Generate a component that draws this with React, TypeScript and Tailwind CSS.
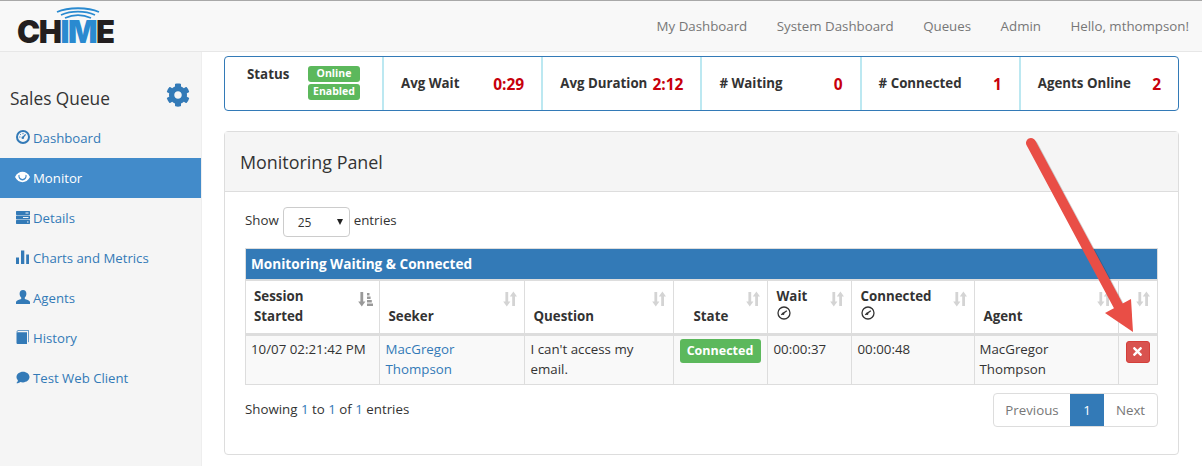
// Chime queue monitor screen
import { ReactNode } from "react";
import { FaCog, FaTimes, FaComment } from "react-icons/fa";

// glyph style icons drawn by hand
function DashIcon({ className }: { className?: string }) {
  return (
    <svg viewBox="0 0 14 14" className={className} fill="none">
      <circle cx="7" cy="7" r="6" stroke="currentColor" strokeWidth="2" />
      <path d="M6.600 7.800 9.600 4.400" stroke="currentColor" strokeWidth="1.300" />
      <circle cx="6.800" cy="7.800" r="1.300" fill="currentColor" />
      <path d="M3.200 7h1.200M7 3v1.200M4.200 4.200l.8.800" stroke="currentColor" strokeWidth="1" />
    </svg>
  );
}

function EyeIcon({ className }: { className?: string }) {
  return (
    <svg viewBox="0 0 16 12" className={className}>
      <path fill="currentColor" d="M0 6C2 2.200 5 .5 8 .5s6 1.700 8 5.500c-2 3.800-5 5.500-8 5.500S2 9.800 0 6Z" />
      <path fill="#428bca" fillRule="evenodd" d="M3.600 4.200C3.400 7.400 5.400 9.600 8 9.600s4.600-2.200 4.400-5.400l-1.200-.6C11.600 6.200 10.200 8 8 8S4.400 6.200 4.800 3.600Z" />
    </svg>
  );
}

function TasksIcon({ className }: { className?: string }) {
  return (
    <svg viewBox="0 0 14 13" className={className}>
      <path
        fill="currentColor"
        fillRule="evenodd"
        d="M.5 0h13l.5.5v3l-.5.5H.5L0 3.500v-3ZM9.500 1.500v1h3v-1ZM.5 4.500h13l.5.500v3l-.5.500H.5L0 8V5ZM7 6v1h5.500V6ZM.5 9h13l.5.500v3l-.5.500H.5L0 12.500v-3ZM11 10.500v1h1.500v-1Z"
      />
    </svg>
  );
}

function StatsIcon({ className }: { className?: string }) {
  return (
    <svg viewBox="0 0 13 14" className={className}>
      <path fill="currentColor" d="M0 7.500h3V14H0ZM5 .5h3.300V14H5ZM10.200 4.500H13V14h-2.800Z" />
    </svg>
  );
}

function UserIcon({ className }: { className?: string }) {
  return (
    <svg viewBox="0 0 14 14" className={className}>
      <path fill="currentColor" d="M7 0c2.200 0 3.400 1.600 3.400 3.700 0 1.500-.6 3-1.600 3.900v1.500c2 .6 4.200 1.500 5.200 2.600V14H0v-2.300c1-1.100 3.200-2 5.200-2.600V7.600c-1-.9-1.600-2.400-1.600-3.900C3.600 1.600 4.800 0 7 0Z" />
    </svg>
  );
}

function BookIcon({ className }: { className?: string }) {
  return (
    <svg viewBox="0 0 13 14" className={className}>
      <path fill="currentColor" d="M.5 2.200h10.500V14H1.200L.5 13.300Z" />
      <path fill="none" stroke="currentColor" strokeWidth="0.800" d="M.8 2 1.800.4h10.800v11.800" />
    </svg>
  );
}

function SortIcon({ className }: { className?: string }) {
  return (
    <svg viewBox="0 0 14 16" className={className}>
      <path fill="currentColor" d="M2.400 1h2.800v9.500h2.200L3.800 15.500.2 10.500h2.200ZM9.200 5.500H6.800L10.400.5 14 5.500h-2v9.500H9.200Z" />
    </svg>
  );
}

function SortAttrIcon({ className }: { className?: string }) {
  return (
    <svg viewBox="0 0 15 16" className={className}>
      <path fill="currentColor" d="M2.400 1h2.800v9.500h2.200L3.800 15.500.2 10.500h2.200ZM9 2h2.500v2.400H9ZM9 5.500h3.600v2.400H9ZM9 9h4.800v2.400H9ZM9 12.500h6V15H9Z" />
    </svg>
  );
}

function TimerIcon() {
  return (
    <span className="block h-[20px]">
      <svg viewBox="0 0 14 14" className="w-[14px] h-[14px] text-[#333]" fill="none">
        <circle cx="7" cy="7" r="6" stroke="currentColor" strokeWidth="1.300" />
        <path d="M4.200 8.800 9.800 4.800" stroke="currentColor" strokeWidth="1.300" />
        <circle cx="6.200" cy="7.800" r="1.200" fill="currentColor" />
      </svg>
    </span>
  );
}

const navItems: { label: string; icon: ReactNode; active?: boolean }[] = [
  { label: "Dashboard", icon: <DashIcon className="w-[14px] h-[14px]" /> },
  { label: "Monitor", icon: <EyeIcon className="w-[15px] h-[12px]" />, active: true },
  { label: "Details", icon: <TasksIcon className="w-[14px] h-[13px]" /> },
  { label: "Charts and Metrics", icon: <StatsIcon className="w-[13px] h-[14px]" /> },
  { label: "Agents", icon: <UserIcon className="w-[14px] h-[14px]" /> },
  { label: "History", icon: <BookIcon className="w-[13px] h-[14px]" /> },
  { label: "Test Web Client", icon: <FaComment className="w-[14px] h-[13px]" /> },
];

const stats = [
  { label: "Avg Wait", value: "0:29" },
  { label: "Avg Duration", value: "2:12" },
  { label: "# Waiting", value: "0" },
  { label: "# Connected", value: "1" },
  { label: "Agents Online", value: "2" },
];

function Th({ width, children, attr, last }: { width: number; children?: ReactNode; attr?: boolean; last?: boolean }) {
  return (
    <th
      style={{ width }}
      className={`relative align-bottom text-left border-b-[3px] border-b-[#ddd] ${last ? "" : "border-r border-r-[#ddd]"} pl-[9px] pr-6 pb-[4px] pt-[6px] font-bold leading-[20px] text-[#333]`}
    >
      {children}
      {attr ? (
        <SortAttrIcon className="absolute top-[10px] right-[6px] w-[15px] h-[16px] text-[#999]" />
      ) : (
        <SortIcon className="absolute top-[10px] right-[7px] w-[14px] h-[16px] text-[#d4d4d4]" />
      )}
    </th>
  );
}

export default function App() {
  return (
    <div className="relative w-[1202px] h-[466px] overflow-hidden bg-white font-['Open_Sans',sans-serif] text-[13.300px] leading-[20px] text-[#333]">
      {/* top navbar */}
      <header className="h-[52px] bg-[#f8f8f8] border-t border-t-[#a8a8a8] border-b border-b-[#e7e7e7] flex items-center justify-between pl-[17px] pr-[13px]">
        <div className="relative w-[98px] h-[46px]">
          <svg viewBox="0 0 44 12" className="absolute left-[39px] top-[4px] w-[44px] h-[13px]" fill="none" stroke="#2a8ad0">
            <path d="M1 4.500C12 -.5 32 -.5 43 4.500" strokeWidth="1.800" />
            <path d="M5 7.500C15 3 29 3 39 7.500" strokeWidth="1.800" />
            <path d="M9 10.500C17 7 27 7 35 10.500" strokeWidth="1.800" />
          </svg>
          <div className="absolute left-0 top-[11px] font-['Inter',sans-serif] font-black text-[31px] leading-[36px] tracking-[-1.500px] text-[#231f20]">
            CH<span className="text-[#2a8ad0]">IM</span>E
          </div>
        </div>
        <nav className="flex items-center gap-[29.500px] text-[#777] pb-[1px]">
          <span>My Dashboard</span>
          <span>System Dashboard</span>
          <span>Queues</span>
          <span>Admin</span>
          <span>Hello, mthompson!</span>
        </nav>
      </header>

      <div className="flex h-[414px]">
        {/* sidebar */}
        <aside className="w-[202px] shrink-0 bg-[#f5f5f5] border-r border-r-[#eeeeee]">
          <div className="h-[66px] pl-[10px] pr-[11px] pt-[28px] flex items-start justify-between">
            <span className="text-[17.300px] leading-[38px] text-[#333]">Sales Queue</span>
            <FaCog className="w-[24px] h-[24px] text-[#337ab7] mt-[3px]" />
          </div>
          <ul>
            {navItems.map((item) => (
              <li
                key={item.label}
                className={`h-[40px] flex items-center gap-[3px] pl-[15px] text-[13.200px] ${item.active ? "bg-[#428bca] text-white" : "text-[#337ab7]"}`}
              >
                <span className="w-[15px] flex items-center justify-center -mt-[2px]">{item.icon}</span>
                <span>{item.label}</span>
              </li>
            ))}
          </ul>
        </aside>

        {/* main area */}
        <main className="w-[955px] ml-[22px] pt-[4px]">
          {/* stat strip */}
          <div className="h-[55px] border border-[#337ab7] rounded-[4px] flex">
            <div className="w-[159px] border-r-2 border-r-[#bce8f1] flex items-start pl-[22px] pt-[5px] font-bold">
              <span className="w-[60px] mt-[2px]">Status</span>
              <div className="flex flex-col gap-[2px] ml-[1px] mt-[4px]">
                <span className="w-[52px] h-[16px] bg-[#5cb85c] rounded-[3px] text-white text-[10.500px] leading-[15px] text-center">Online</span>
                <span className="w-[52px] h-[16px] bg-[#5cb85c] rounded-[3px] text-white text-[10.500px] leading-[15px] text-center">Enabled</span>
              </div>
            </div>
            {stats.map((s, i) => (
              <div
                key={s.label}
                className={`flex-1 flex items-center justify-between pl-[17px] pr-[17px] font-bold ${i < stats.length - 1 ? "border-r-2 border-r-[#bce8f1]" : ""}`}
              >
                <span className="whitespace-nowrap -mt-[2px]">{s.label}</span>
                <span className="text-[#c7000b] text-[15.500px]">{s.value}</span>
              </div>
            ))}
          </div>

          {/* monitoring panel */}
          <section className="mt-[20px] h-[324px] border border-[#ddd] rounded-[4px]">
            <div className="h-[60px] bg-[#f5f5f5] border-b border-b-[#ddd] flex items-center pl-[15px] text-[17.900px] font-medium text-[#333]">
              Monitoring Panel
            </div>
            <div className="pl-[20px] pr-[20px] pt-[15px]">
              <div className="flex items-center gap-[4px] h-[30px]">
                <span className="-mt-[4px]">Show</span>
                <div className="w-[67px] h-[30px] border border-[#ccc] rounded-[4px] flex items-center justify-between pl-[14px] pr-[6px] text-[12px]">
                  <span className="mt-[2px]">25</span>
                  <span className="w-0 h-0 border-l-[3.500px] border-r-[3.500px] border-t-[6px] border-l-transparent border-r-transparent border-t-[#222]" />
                </div>
                <span className="-mt-[4px]">entries</span>
              </div>

              <div className="mt-[11px] w-[913px] border border-[#ddd]">
                <div className="h-[30px] bg-[#337ab7] text-white text-[13.600px] font-bold flex items-center pl-[5px]">
                  Monitoring Waiting &amp; Connected
                </div>
                <table className="w-full table-fixed border-collapse">
                  <thead>
                    <tr className="h-[54px] border-t-[2px] border-t-[#ddd]">
                      <Th width={133} attr>
                        <span className="block -translate-y-[3px] -ml-[1px]">Session Started</span>
                      </Th>
                      <Th width={145}>
                        <span className="block -translate-y-[3px]">Seeker</span>
                      </Th>
                      <Th width={149}>
                        <span className="block -translate-y-[3px]">Question</span>
                      </Th>
                      <Th width={94}>
                        <span className="block -translate-y-[3px] pl-[11px]">State</span>
                      </Th>
                      <Th width={84}>
                        <span className="block -translate-y-[3px]">
                          Wait
                          <TimerIcon />
                        </span>
                      </Th>
                      <Th width={123}>
                        <span className="block -translate-y-[3px]">
                          Connected
                          <TimerIcon />
                        </span>
                      </Th>
                      <Th width={144}>
                        <span className="block -translate-y-[3px]">Agent</span>
                      </Th>
                      <Th width={39} last />
                    </tr>
                  </thead>
                  <tbody>
                    <tr className="bg-[#f9f9f9] h-[50px] align-top">
                      <td className="px-[5px] pt-[3px] border-r border-r-[#ddd] whitespace-nowrap">10/07 02:21:42 PM</td>
                      <td className="px-[6px] pt-[3px] border-r border-r-[#ddd] text-[#337ab7]">MacGregor Thompson</td>
                      <td className="px-[6px] pt-[3px] border-r border-r-[#ddd]">I can't access my email.</td>
                      <td className="px-[6px] pt-[3px] border-r border-r-[#ddd]">
                        <span className="block w-[81px] h-[24px] bg-[#5cb85c] rounded-[3px] text-white text-[12.500px] font-bold text-center leading-[23px]">Connected</span>
                      </td>
                      <td className="px-[6px] pt-[3px] border-r border-r-[#ddd]">00:00:37</td>
                      <td className="px-[6px] pt-[3px] border-r border-r-[#ddd]">00:00:48</td>
                      <td className="px-[5px] pt-[3px] border-r border-r-[#ddd]">MacGregor Thompson</td>
                      <td className="pl-[7px] pt-[5px]">
                        <span className="w-[24px] h-[22px] bg-[#d9534f] border border-[#d43f3a] rounded-[3px] flex items-center justify-center">
                          <FaTimes className="w-[13px] h-[13px] text-white" />
                        </span>
                      </td>
                    </tr>
                  </tbody>
                </table>
              </div>

              <div className="mt-[8px] w-[913px] flex items-start justify-between">
                <span className="mt-[6px]">
                  Showing <span className="text-[#337ab7]">1</span> to <span className="text-[#337ab7]">1</span> of <span className="text-[#337ab7]">1</span> entries
                </span>
                <div className="h-[34px] flex border border-[#ddd] rounded-[4px] text-[#777] overflow-hidden">
                  <span className="w-[76px] flex items-center justify-center">Previous</span>
                  <span className="w-[34px] -my-[1px] bg-[#337ab7] text-white flex items-center justify-center">1</span>
                  <span className="w-[53px] flex items-center justify-center">Next</span>
                </div>
              </div>
            </div>
          </section>
        </main>
      </div>

      {/* annotation arrow drawn on top of the screenshot */}
      <svg className="absolute left-0 top-0 w-[1202px] h-[466px] pointer-events-none" viewBox="0 0 1202 466">
        <path d="M1031 143 L1120 309" stroke="#000" strokeOpacity="0.18" strokeWidth="10" strokeLinecap="round" transform="translate(2 2)" />
        <path d="M1031 143 L1120 309" stroke="#e94e46" strokeWidth="10" strokeLinecap="round" />
        <path d="M1105 313 L1131 299 L1133 332 Z" fill="#e94e46" />
      </svg>
    </div>
  );
}
